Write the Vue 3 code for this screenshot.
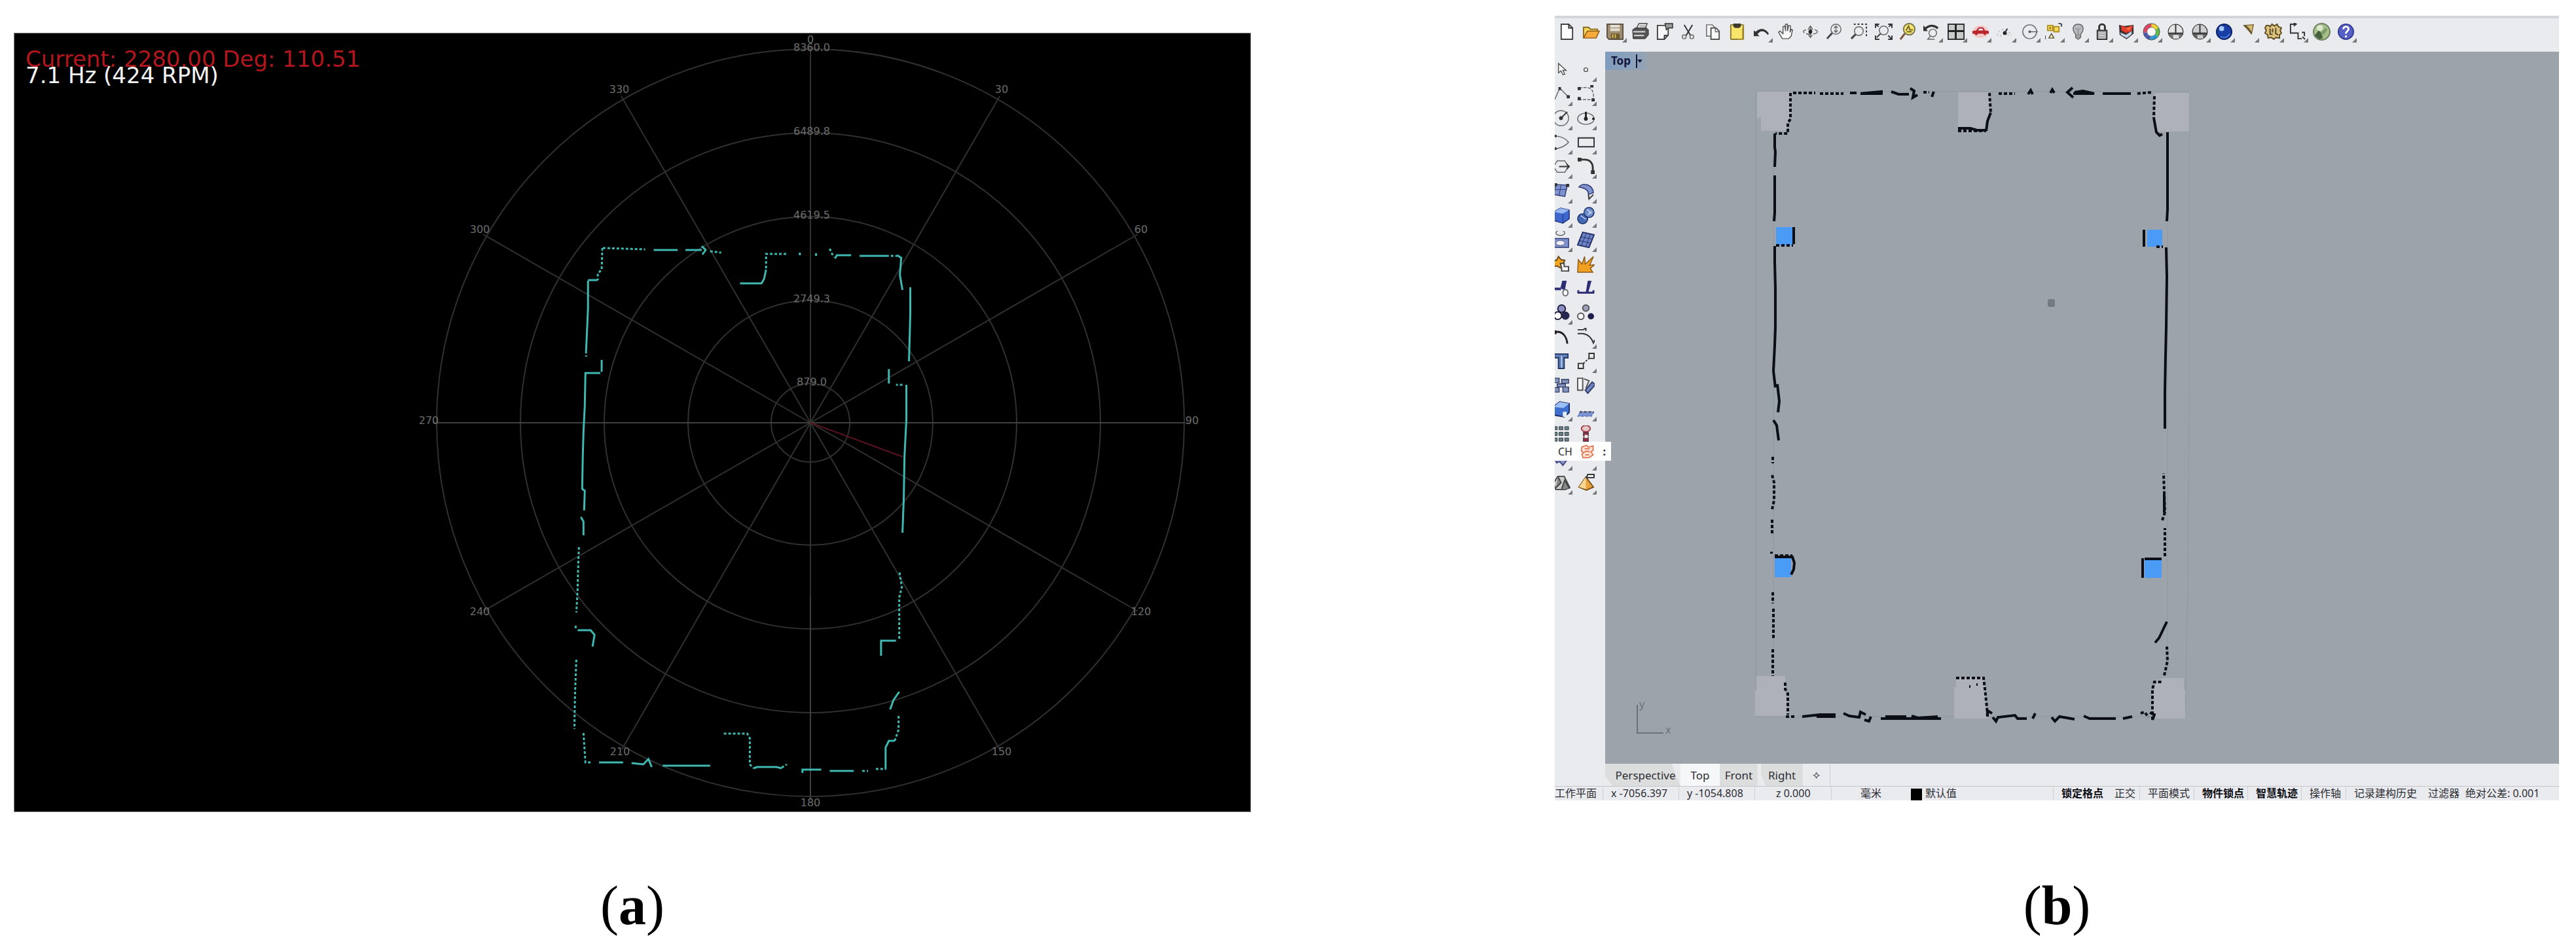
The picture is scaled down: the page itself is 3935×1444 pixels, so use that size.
<script setup>
const rings = [
  { r: 60, label: '879.0' },
  { r: 187, label: '2749.3' },
  { r: 315, label: '4619.5' },
  { r: 443, label: '6489.8' },
  { r: 571, label: '8360.0' }
]
const cx = 1216
const cy = 595
const spokes = Array.from({ length: 12 }, (_, i) => {
  const a = (i * 30 * Math.PI) / 180
  return {
    deg: i * 30,
    x: Math.round(cx + Math.sin(a) * 577),
    y: Math.round(cy - Math.cos(a) * 576),
    tx: Math.round(cx + Math.sin(a) * 583),
    ty: Math.round(cy - Math.cos(a) * (i === 0 ? 588 : 584)) + (i === 0 ? 8 : 2)
  }
})

const K = 'fill="none" stroke="#333" stroke-width="2"'
const G = 'fill="none" stroke="#666" stroke-width="1.5"'
const tools = [
  { n: 'New', s: `<path d="M5 2h12l6 6v18H5z" fill="#fdfdfd" stroke="#444" stroke-width="2"/><path d="M17 2v6h6" ${K}/>` },
  { n: 'Open', s: '<path d="M2 24V7h8l3 3h11v5" fill="#f6d85a" stroke="#8a6a1c" stroke-width="2"/><path d="M2 24l6-11h19l-5 11z" fill="#f7a93c" stroke="#8a5a18" stroke-width="1.5"/>' },
  { n: 'Save', f: 1, s: '<path d="M1 2h25v24H4l-3-3z" fill="#a08d72" stroke="#5c5142" stroke-width="2"/><path d="M6 3h15v10H6z" fill="#e3ded2"/><path d="M6 8h15" stroke="#8b7c66"/><path d="M7 17h14v8H7z" fill="#6e5a2c"/><path d="M10 18v6M14 18v6" stroke="#d6b95c" stroke-width="2"/>' },
  { n: 'Print', s: '<path d="M8 9l4-8h13l-3 8z" fill="#eee" stroke="#444" stroke-width="1.5"/><path d="M13 5h9" stroke="#555"/><path d="M2 11l4-3h18l3 3v8l-5 6H3z" fill="#555" stroke="#222"/><path d="M3 14h19M4 20h16" stroke="#ddd" stroke-width="2"/>' },
  { n: 'Properties', s: `<path d="M3 4h17v15l-6 7H3z" fill="#f8f8f8" stroke="#444" stroke-width="2"/><path d="M14 26v-6h6" ${K}/><path d="M15 1h12v7h-7l-3 3z" fill="#999" stroke="#333" stroke-width="1.5"/>` },
  { n: 'Cut', s: `<path d="M7 3l10 17M20 3L10 20" ${K}/><circle cx="7" cy="22" r="3" ${G}/><circle cx="19" cy="22" r="3" ${G}/>` },
  { n: 'Copy', s: `<path d="M4 3h9l4 4v14H4z" fill="#f5f5f5" stroke="#666" stroke-width="1.5"/><path d="M11 8h8l5 5v13H11z" fill="#fafafa" stroke="#555" stroke-width="2"/><path d="M18 8v6h6" ${G}/>` },
  { n: 'Paste', s: '<rect x="4" y="3" width="20" height="23" rx="1" fill="#f8e56b" stroke="#8c7a32" stroke-width="2"/><path d="M8 1h12v5l-3 2h-6L8 6z" fill="#3d3a2c"/><path d="M23 8v18h-8" fill="none" stroke="#a88b30" stroke-width="2"/>' },
  { n: 'Undo', f: 1, s: '<path d="M1 12v9h9l-3-3c4-6 10-7 16 1l2-2C19 7 10 8 4 14z" fill="#333"/>' },
  { n: 'Pan', s: `<path d="M8 25L2 15l2-2 5 4V6l3-1 1 8V2h3v11l2-9 3 1-1 10 2-5 2 1-2 10-4 4z" fill="#fafafa" stroke="#555" stroke-width="1.5"/>` },
  { n: 'Rotate view', s: `<ellipse cx="14" cy="14" rx="11" ry="4" ${G} stroke-dasharray="8 3"/><path d="M14 5v18M11 9l3-4 3 4M11 19l3 4 3-4" ${G}/><circle cx="14" cy="14" r="3" fill="#222"/>` },
  { n: 'Zoom dynamic', s: `<circle cx="16" cy="10" r="8" ${G}/><path d="M10 16L2 25" stroke="#444" stroke-width="3"/><path d="M16 5v10M13 8l3-3 3 3M13 12l3 3 3-3" ${G}/>` },
  { n: 'Zoom window', s: `<path d="M6 2h20v18h-4" ${K} stroke-dasharray="3 3"/><circle cx="14" cy="13" r="7" ${G}/><path d="M9 18l-7 7" stroke="#444" stroke-width="3"/>` },
  { n: 'Zoom extents', s: `<circle cx="14" cy="12" r="7" ${G}/><path d="M9 17l-6 6" ${K}/><path d="M1 8V2h6M21 2h6v6M27 20v6h-6M7 26H1v-6M1 2l5 4M27 2l-5 4M27 26l-6-6" ${K}/>` },
  { n: 'Zoom selected', s: '<circle cx="16" cy="10" r="9" fill="#f5e36a" stroke="#777452" stroke-width="2"/><path d="M9 17l-7 9" stroke="#774d35" stroke-width="3"/><path d="M11 12l4-7 2 6h5M12 14h8" fill="none" stroke="#6b6431" stroke-width="2"/>' },
  { n: 'Undo view', f: 1, s: `<path d="M0 4v9h7l-2-3c5-5 11-5 17 0l2-3C17 1 9 2 3 7z" fill="#333"/><circle cx="15" cy="16" r="6" ${G}/><path d="M11 21l-4 5h11" ${G}/>` },
  { n: 'Viewports', f: 1, s: '<path d="M1 2h25v24H1z" fill="#c7ccca" stroke="#333" stroke-width="2"/><path d="M13 2v24M1 13h25" stroke="#222" stroke-width="3"/>' },
  { n: 'Set view', f: 1, s: '<ellipse cx="14" cy="14" rx="13" ry="10" fill="#f4c9ca"/><path d="M1 17v-4l6-1 4-5h7l3 5 6 1v4h-4l-2 3-3-3H10l-3 3-3-3z" fill="#b8252b"/><path d="M12 9h5l1 3h-8z" fill="#eee"/>' },
  { n: 'Set CPlane', f: 1, s: `<path d="M2 20c2-9 9-12 15-8l8 6M6 21c5-4 10-4 18-1" fill="none" stroke="#999" stroke-dasharray="3 3"/><circle cx="14" cy="16" r="3" fill="#222"/><path d="M14 16l4-7" ${K}/>` },
  { n: 'Object snap', f: 1, s: `<circle cx="14" cy="14" r="11" ${G}/><path d="M14 14h13" ${G}/><circle cx="14" cy="14" r="2" fill="#555"/>` },
  { n: 'Select', f: 1, s: '<path d="M4 4h8v8H4zM14 6h8v8h-8z" fill="#f6e05a" stroke="#b18e26" stroke-width="2"/><circle cx="8" cy="8" r="1.5" fill="#875f1e"/><path d="M10 17l4 7H6z" fill="#f7f0ba" stroke="#5a5336" stroke-width="1.5"/><path d="M21 0l5 2v4M0 26v-6" fill="none" stroke="#444" stroke-width="2"/>' },
  { n: 'Hide', f: 1, s: '<path d="M10 18C3 10 6 2 14 2s11 8 4 16v5l-4 3-4-3z" fill="#b7b9bd" stroke="#666" stroke-width="1.5"/><path d="M10 8l4 3 4-3M14 11v8M10 19h8M10 22h8" fill="none" stroke="#777"/>' },
  { n: 'Lock', f: 1, s: `<path d="M9 12V6c0-5 9-5 9 0v6" fill="none" stroke="#333" stroke-width="3"/><path d="M6 12h15v14H6z" fill="#aaa" stroke="#333" stroke-width="2"/><path d="M8 16h11M8 20h11M8 24h11" stroke="#eee"/>` },
  { n: 'Layers', f: 1, s: '<path d="M2 3l8 2 15-2v14l-11 9-11-7z" fill="#3a3030"/><path d="M5 4l8 3 11-3-2 9-9 3-7-4z" fill="#e43b2d"/><path d="M4 15l9 4 9-6v5l-8 6-9-5z" fill="#c3d6ec"/><path d="M12 9l10-3-4 6z" fill="#f4703c"/>' },
  { n: 'Colour', f: 1, s: '<g fill="none" stroke-width="6"><path d="M14 4a10 10 0 0 1 9 5" stroke="#f1d12c"/><path d="M23 9a10 10 0 0 1-1 11" stroke="#62bb46"/><path d="M22 20a10 10 0 0 1-10 4" stroke="#2e9bd0"/><path d="M12 24a10 10 0 0 1-8-9" stroke="#4d56b0"/><path d="M4 15a10 10 0 0 1 10-11" stroke="#dd4560"/></g><circle cx="14" cy="14" r="13" fill="none" stroke="#555"/><circle cx="14" cy="14" r="7" fill="#fff" stroke="#777"/>' },
  { n: 'Shade', s: '<circle cx="14" cy="14" r="12" fill="#777" stroke="#333"/><path d="M3 15C3 7 8 3 12 3h4c5 1 9 6 9 12z" fill="#e4e4e4"/><path d="M10 19h9v6h-9z" fill="#ddd"/><path d="M14 2v14M2 17h24" stroke="#333" stroke-width="2"/>' },
  { n: 'Shade all', f: 1, s: '<circle cx="14" cy="14" r="12" fill="#666" stroke="#333"/><path d="M3 15C3 7 8 3 12 3h4c5 1 9 6 9 12z" fill="#cfcfcf"/><path d="M10 19h9v6h-9z" fill="#ccc"/><path d="M14 2v14M2 17h24" stroke="#333" stroke-width="2"/>' },
  { n: 'Render', f: 1, s: '<circle cx="14" cy="14" r="12" fill="#173fa5" stroke="#0b2364" stroke-width="2"/><circle cx="10" cy="9" r="4" fill="#a8c8f5"/><path d="M8 22c6 3 12 1 15-5" fill="none" stroke="#4a7be0" stroke-width="2"/>' },
  { n: 'Spotlight', f: 1, s: '<path d="M7 4l15-1-3 14z" fill="#d9bd72" stroke="#7c6533" stroke-width="1.5"/><path d="M7 4c5 1 9 6 12 13" fill="none" stroke="#5a4b2c" stroke-width="2"/>' },
  { n: 'Options', f: 1, s: '<path d="M3 4h4l2 2 3-4 4 3 4-3 2 4 5 2-2 4 2 4-3 3v5l-6-1-3 3-4-3-5 1-1-5-4-3 2-4-2-4z" fill="#dcc27a" stroke="#5b4a22" stroke-width="2"/><path d="M9 9v9h4M13 9v6M18 8v9l4 2" fill="none" stroke="#4f452a" stroke-width="2"/>' },
  { n: 'Dimension', f: 1, s: `<path d="M11 2H3v14h12v9h6" ${K}/><path d="M8 0l4 2-4 3M22 22l4 4M21 15h4v6" ${K}/>` },
  { n: 'Grasshopper', s: '<circle cx="14" cy="14" r="13" fill="#a5c088" stroke="#6f7f62" stroke-width="2"/><path d="M3 20l6-8 4 3 3 9-6 2z" fill="#45603c"/><path d="M12 16l8-8 3 3-6 8z" fill="#7d9a68"/><circle cx="11" cy="8" r="5" fill="#dbe7c9"/>' },
  { n: 'Help', f: 1, s: '<circle cx="14" cy="14" r="12" fill="#5560c4" stroke="#353d94" stroke-width="2"/><path d="M10 10c0-6 9-5 8 0 0 3-4 3-4 7M14 20v3" fill="none" stroke="#fff" stroke-width="3"/>' }
]

const B = 'fill="#7d92cf" stroke="#2c3570" stroke-width="1.5"'
const palette = [
  { n: 'Pointer', s: '<path d="M9 4v15l4-3 3 6 3-1-3-6h5z" fill="#fafafa" stroke="#555" stroke-width="1.5"/>' },
  { n: 'Point', f: 1, s: '<circle cx="14" cy="14" r="3" fill="#fff" stroke="#555" stroke-width="1.5"/>' },
  { n: 'Polyline', f: 1, s: `<path d="M3 23l8-18 14 14" ${G}/><path d="M9 3h4v5H9zM22 16h5v5h-5z" fill="#333"/>` },
  { n: 'Control curve', f: 1, s: `<path d="M3 5c20-4 24 2 23 18H3" ${G} stroke-dasharray="5 2"/><path d="M1 3h5v5H1zM1 19h5v5H1zM21-1h5v5h-5zM23 21h5v5h-5z" fill="#333"/>` },
  { n: 'Circle', f: 1, s: `<circle cx="13" cy="14" r="12" ${G}/><path d="M13 14l10-10" ${K}/><circle cx="13" cy="14" r="3" fill="#333"/>` },
  { n: 'Ellipse', f: 1, s: `<ellipse cx="14" cy="15" rx="13" ry="9" ${G}/><path d="M14 4v14M24 15h4" stroke="#222" stroke-width="3"/><circle cx="14" cy="15" r="3" fill="#222"/>` },
  { n: 'Arc', f: 1, s: `<path d="M2 4c11 0 18 3 23 10-5 6-12 9-23 11" ${G}/><path d="M0 2h6v4H0zM0 22h6v4H0z" fill="#333"/>` },
  { n: 'Rectangle', f: 1, s: `<path d="M2 7h25v14H2z" ${K}/>` },
  { n: 'Polygon', f: 1, s: `<path d="M7 5h12l6 9-6 9H7l-6-9z" ${G}/><path d="M10 14h16M22 10l4 4-4 4" ${K}/>` },
  { n: 'Fillet', f: 1, s: `<path d="M3 3h9c9 0 13 6 13 13v9" fill="none" stroke="#333" stroke-width="3"/><path d="M1 0h6v6H1zM22 20h6v6h-6z" fill="#333"/>` },
  { n: 'Surface', f: 1, s: `<path d="M4 3l19 1-4 18-17-3z" ${B}/><path d="M3 11h19M13 3l-3 18" stroke="#2c3570"/><path d="M2 1h5v5H2zM21 2h5v5h-5z" fill="#333"/>` },
  { n: 'Revolve', f: 1, s: `<path d="M3 7C10-1 25 3 26 16l-8 3c0-8-6-10-15-12z" ${B} /><path d="M18 19l1 7 7-7" ${K}/>` },
  { n: 'Box', f: 1, s: '<path d="M2 8l10-6 14 3v14l-10 7-14-4z" fill="#3d67cd" stroke="#1b2f77" stroke-width="1.5"/><path d="M2 8l10-6 14 3-10 6z" fill="#95b8f4"/><path d="M16 11v15" stroke="#1b2f77"/>' },
  { n: 'Boolean', f: 1, s: '<circle cx="9" cy="19" r="8" fill="#4668b4" stroke="#1b2f67" stroke-width="1.5"/><circle cx="19" cy="9" r="8" fill="#6b8bcb" stroke="#1b2f67" stroke-width="1.5"/><path d="M6 14l8 6M16 4l7 7M17 13l6-6" stroke="#cbd9f3" stroke-width="1.5"/>' },
  { n: 'Project', f: 1, s: `<ellipse cx="12" cy="3" rx="7" ry="4" ${G}/><path d="M1 12h24v14H1z" ${B}/><ellipse cx="12" cy="19" rx="7" ry="4" fill="#eef" stroke="#556"/>` },
  { n: 'Mesh', f: 1, s: '<path d="M9 2l18 4-8 20-18-4z" fill="#6d85c8" stroke="#252e64" stroke-width="2"/><path d="M6 9l18 4M3 15l18 4M15 3L7 23M21 5l-7 20" stroke="#252e64"/>' },
  { n: 'Explode', s: '<path d="M1 8h5l3-6 4 5 6 1-3 6-4 6-5-3-6 1z" fill="#f4a91d" stroke="#6a4818" stroke-width="2"/><path d="M12 13h6v5h7v7H14v-5z" fill="#fff" stroke="#444" stroke-width="2"/>' },
  { n: 'Split', s: '<path d="M1 27l1-20 6 7 4-12 1 12L26 2l-6 14 8-1-7 6 4 6z" fill="#f2a022" stroke="#8a5a1c" stroke-width="1.5"/>' },
  { n: 'Trim', s: '<path d="M1 15h12" stroke="#2b2c72" stroke-width="4"/><path d="M12 14l3-12h7l-3 15z" fill="#2b2c72"/><ellipse cx="20" cy="21" rx="4" ry="5" fill="#fff" stroke="#667" stroke-width="2"/>' },
  { n: 'Join', s: '<path d="M1 21h26M2 17v5M26 17v5" stroke="#2b2c72" stroke-width="3" fill="none"/><path d="M14 20l3-18h6l-5 18z" fill="#2b2c72"/>' },
  { n: 'Group', f: 1, s: '<circle cx="14" cy="8" r="6" fill="#8b8ec0" stroke="#1c1c3a" stroke-width="2"/><circle cx="8" cy="19" r="6" fill="#fff" stroke="#1c1c3a" stroke-width="2"/><circle cx="20" cy="19" r="6" fill="#25254f" stroke="#1c1c3a"/>' },
  { n: 'Ungroup', s: '<circle cx="14" cy="7" r="5" fill="#9a9fb8" stroke="#555" stroke-width="2"/><circle cx="6" cy="20" r="5" fill="#fff" stroke="#555" stroke-width="2"/><circle cx="22" cy="20" r="5" fill="#1d1d48"/>' },
  { n: 'Edit curve', s: `<path d="M2 7c14-4 20 8 21 18" fill="none" stroke="#222" stroke-width="3"/><path d="M1 4h5v6H1z" fill="#222"/>` },
  { n: 'Extend', f: 1, s: `<path d="M1 3h9l4-3v5M1 9h8c9 1 14 7 17 15l2-5" fill="none" stroke="#333" stroke-width="2"/>` },
  { n: 'Text', s: '<path d="M2 3h22v6h-6v17h-9V9H2z" fill="#5f7db6" stroke="#223663" stroke-width="2"/><path d="M14 6v19" stroke="#b9cbed" stroke-width="2"/>' },
  { n: 'Move', f: 1, s: `<path d="M19 2h8v8h-8zM2 18h8v8H2z" fill="#eee" stroke="#333" stroke-width="2"/><path d="M10 18l9-8" ${K} stroke-dasharray="3 2"/>` },
  { n: 'Array', s: '<path d="M2 3h8v7H2zM14 5h11v6H14zM2 18h8v7H2zM16 17h9v8h-9zM7 12h13v5H7z" fill="#8594bb" stroke="#323d66" stroke-width="1.5"/>' },
  { n: 'Rotate', s: '<path d="M1 3h8v19H1z" fill="#f5f5fb" stroke="#555" stroke-width="2"/><path d="M11 4l8 3-5 12" fill="none" stroke="#555" stroke-width="2"/><path d="M24 9l5 4-12 14-4-5z" fill="#6f83c0" stroke="#33406d" stroke-width="2"/>' },
  { n: 'Solid', f: 1, s: '<path d="M1 10L11 2l15 3v14l-8 7-17-3z" fill="#3e6fcd" stroke="#1b2f67" stroke-width="2"/><path d="M1 10L11 2l15 3-9 7z" fill="#9cc0f5"/><path d="M16 18h6v8h-6z" fill="#e8eefc"/>' },
  { n: 'Plane', f: 1, s: '<path d="M5 18h22l-4 7H1z" fill="#7c93d6" stroke="#43559c" stroke-dasharray="5 2"/><path d="M4 18h22" stroke="#333" stroke-width="2" stroke-dasharray="4 3"/>' },
  { n: 'Grid', s: '<path d="M1 2h6v5H1zM10 2h6v5h-6zM19 2h6v5h-6zM1 11h6v5H1zM10 11h6v5h-6zM19 11h6v5h-6zM1 20h6v5H1zM10 20h6v5h-6zM19 20h6v5h-6z" fill="#6d8388" stroke="#28363c"/>' },
  { n: 'Analyse', s: '<ellipse cx="14" cy="5" rx="7" ry="5" fill="#e6c9cb" stroke="#a43d45" stroke-width="2"/><path d="M10 11h8v6h-8zM10 19h8v7h-8z" fill="#8d2f45" stroke="#333"/><path d="M12 15h5v5h-5z" fill="#eee"/>' },
  { n: 'Flow', f: 1, s: '<path d="M1 10l20-4 4 7-9 12-5-6-5 2z" fill="#8894c4" stroke="#434d84" stroke-width="2"/>' },
  { n: 'Drop', f: 1, s: '<path d="M5 8h8l-4 8z" fill="#222"/>' },
  { n: 'Sphere', f: 1, s: '<path d="M1 15L8 4h10l9 18-8 3H5z" fill="#c9cbc9" stroke="#444" stroke-width="2"/><path d="M14 24l5-14 7 13M8 4l5 10-8 8" fill="#888" stroke="#444" stroke-width="2"/>' },
  { n: 'Cone', f: 1, s: '<path d="M3 21L14 5l12 16-11 5z" fill="#e9a23c" stroke="#75501d" stroke-width="2"/><path d="M14 5L3 21l11 3z" fill="#f8d794"/><path d="M17 1h10v5H15z" fill="#fff" stroke="#333" stroke-width="2"/>' }
]

const views = [
  { n: 'Perspective', c: 'perspective' },
  { n: 'Top', c: 'top' },
  { n: 'Front', c: 'front' },
  { n: 'Right', c: 'right' }
]
const toggles = [
  { n: '锁定格点', on: true, sep: true },
  { n: '正交' },
  { n: '平面模式', sep: true },
  { n: '物件锁点', on: true, sep: true },
  { n: '智慧轨迹', on: true, sep: true },
  { n: '操作轴', sep: true },
  { n: '记录建构历史', sep: true },
  { n: '过滤器' }
]
</script>

<template>
  <main class="page">
    <section class="scan">
      <svg viewBox="0 0 1888 1189" class="canvas" role="img" aria-label="Lidar scan">
        <g class="polar">
          <circle v-for="g in rings" :key="g.r" :cx="cx" :cy="cy" :r="g.r" />
          <line v-for="s in spokes" :key="s.deg" :x1="cx" :y1="cy" :x2="s.x" :y2="s.y" />
          <path d="M645 595H1787M1216 860V1170" class="axis" />
        </g>
        <g class="labels">
          <text v-for="g in rings" :key="g.r" :x="cx + 2" :y="cy - g.r + 3">{{ g.label }}</text>
          <text v-for="s in spokes" :key="s.deg" :x="s.tx" :y="s.ty">{{ s.deg }}</text>
        </g>
        <path d="M1216 595L1357 647" class="beam" />
        <g class="cloud" transform="translate(-17 -51) scale(0.9925 1)">
          <path d="M1001 382H1038M1050 382H1075M1075 376L1081 382L1076 389M900 429V470L898 515L897 536M919 570H896L895 620L893 660L892 695L891 747L895 750L894 780M889 790L893 797V818M884 963H904L910 970L907 988M917 1165H954M967 1166L985 1168L993 1160L998 1172M1015 1170H1088M1155 1174L1160 1172H1190L1198 1174M1230 1181V1176H1259M1272 1178H1309M1365 1084L1370 1070L1379 1057M1351 1002V979H1374M1384 814L1386 760L1387 699L1390 640V588M1363 564V586M1394 552L1396 480V439M1384 443L1382 432L1380 420L1382 394L1376 390M1318 391H1359M1280 395L1283 390H1305M1174 412L1171 426L1167 433H1134M915 428H900M921 550V568M1358 1175V1142L1363 1132H1372" />
          <path class="dots" d="M923 379L988 381M922 379L921 412L915 418V428M1088 384L1105 386M897 536V545M886 836L885 860L884 900L882 936M881 956V960M882 1008L880 1060L879 1114M893 1120L896 1165H905M1109 1121H1145L1149 1128V1168L1155 1174M1198 1173L1206 1168M1322 1178H1331M1343 1175H1359M1372 1132L1378 1115V1091M1379 976V913L1383 897L1379 872M1384 588H1374M1272 380L1278 393M1251 387V392M1226 386V392M1205 388H1174V412M1359 391H1376" />
        </g>
        <text x="17" y="51" class="reading current">Current: 2280.00 Deg: 110.51</text>
        <text x="17" y="76" class="reading">7.1 Hz (424 RPM)</text>
      </svg>
    </section>

    <section class="modeller">
      <nav class="toolbar" aria-label="Standard tools">
        <div class="tools">
          <button v-for="t in tools" :key="t.n" type="button" :aria-label="t.n" class="tool">
            <svg viewBox="0 0 28 28" class="icon" v-html="t.s"></svg>
            <span v-if="t.f" class="corner"></span>
          </button>
        </div>
      </nav>

      <div class="workspace">
        <aside class="side">
          <div class="palette">
            <button v-for="t in palette" :key="t.n" type="button" :aria-label="t.n" class="tool">
              <svg viewBox="0 0 28 28" class="icon" v-html="t.s"></svg>
              <span v-if="t.f" class="corner"></span>
            </button>
          </div>
          <div class="ime">
            <span>CH</span>
            <svg viewBox="0 0 28 28" class="icon"><path d="M4 6l8-3 4 3 8-2v8l-4 2 4 6-8 5H6l-2-6 3-3-4-3zM9 9h9M8 15l5-2 5 2M10 20h7" fill="#fbe3d8" stroke="#e0714a" stroke-width="2" /></svg>
            <b>:</b>
          </div>
        </aside>

        <div class="viewport">
          <button type="button" class="view-name">Top <span class="bar"></span><span class="arrow"></span></button>
          <svg viewBox="2452 79 1457 1088" class="canvas" role="img" aria-label="Top view plan">
            <path class="outline" d="M2682 140H3345M2682 140V1095H3338M3344 142V600L3342 900L3338 1095M2709 205V1033M3311 205V1033" />
            <path class="block" d="M2684 140H2735V182H2731V200H2690V180H2684zM2991 141H3039V172L3034 198H2991zM3291 142H3344V201H3294zM2683 1033H2727V1050L2731 1094H2681V1055H2683zM2988 1035H3030L3037 1098H2985V1050H2988zM3294 1040L3306 1036H3336V1054H3338V1098H3289V1056z" />
            <path class="pillar" d="M2713 347h26v28h-26zM3280 351h23v26h-23zM2711 851h25v31h-25zM3276 853h26v30h-26z" />
            <path class="wall" d="M2826 142H2836M2842 143L2874 140V143H2842M2889 140L2900 144H2916M2918 135L2924 139L2922 149L2929 145M2954 140L2951 148M2711 204V225L2712 232L2711 255M2711 268V325L2710 338M2740 347V373M2711 376V400L2712 440V500L2711 528L2709 567L2712 592M2715 587L2718 613L2716 630M2709 642L2714 650L2717 673M2711 851H2738L2741 860L2740 870L2736 878M2753 1095L2780 1092H2802V1095H2775M2816 1090L2825 1094L2840 1096L2842 1088L2850 1092M2858 1095L2855 1102L2848 1100M2873 1098H2965M2880 1095H2912M2920 1094L2930 1097L2960 1095M3036 1095V1086L3043 1090M3044 1096L3049 1102L3052 1096L3078 1093L3082 1098H3096M3105 1098L3109 1090M3134 1096L3139 1102L3146 1095L3169 1099M3183 1094L3192 1098H3232M3243 1098L3257 1095M3284 1089L3291 1092L3288 1100M3292 982L3298 975L3310 950M3273 853V883M3276 854H3302M3307 655V600L3308 543L3309 500L3310 423L3309 378M3275 351V377M3310 338L3311 320V260V202M3303 205L3299 207L3294 202L3290 180M3212 143H3255M3169 141L3182 139L3199 143H3167M3166 134L3158 141L3167 149M3098 144L3102 138L3105 144M3132 142L3135 137L3138 142M3041 172L3036 185L3034 200M3306 753V783M2991 196H3010L3020 199H3034" />
            <path class="wall dots" d="M2739 142H2773M2780 143H2816M2938 141H2947M2735 142V182L2731 188V204H2712M2713 375H2739M2708 698V708M2707 726L2710 737V765L2707 778M2707 794V817M2706 843V846M2711 849H2738M2708 905V922M2709 930V977M2708 992V1033M2727 1043V1053L2731 1060V1092M2728 1095H2744M2988 1036H3030L3032 1052L3035 1080L3036 1095M3008 1049H3010M3019 1046H3021M3270 1090L3276 1088L3282 1096M3288 1100V1053L3291 1042H3303M3306 1032L3311 1010L3310 988M3307 850V807M3303 795L3307 783L3305 723M3294 377H3304M3265 143L3288 141M3291 147L3290 180M3053 143H3078M3039 142L3041 172M2991 200H3034" />
            <rect x="3128" y="457" width="11" height="12" rx="3" class="cursor" />
            <path class="gizmo" d="M2501 1077V1120H2541" />
            <text x="2504" y="1082" class="gizmo-label">y</text>
            <text x="2544" y="1121" class="gizmo-label">x</text>
          </svg>
        </div>

        <div class="tabs" role="tablist">
          <button v-for="v in views" :key="v.n" type="button" role="tab" :aria-selected="v.n === 'Top'" class="tab" :class="v.c">{{ v.n }}</button>
          <button type="button" class="tab add" aria-label="Add view">✧</button>
        </div>
      </div>

      <footer class="status">
        <span class="plane">工作平面</span>
        <span class="sep">x -7056.397</span>
        <span class="sep">y -1054.808</span>
        <span class="sep zed">z 0.000</span>
        <span class="sep unit">毫米</span>
        <span class="layer"><i></i>默认值</span>
        <button v-for="t in toggles" :key="t.n" type="button" :class="{ on: t.on, sep: t.sep }">{{ t.n }}</button>
        <span class="tolerance">绝对公差: 0.001</span>
      </footer>
    </section>

    <p class="caption">(<b>a</b>)</p>
    <p class="caption">(<b>b</b>)</p>
  </main>
</template>

<style>
body {
  margin: 0;
  background: #fff;
}
</style>

<style scoped>
.page {
  display: grid;
  grid-template-columns: minmax(0, 1888fr) minmax(0, 1534fr);
  column-gap: 465px;
  align-items: start;
  padding: 24px 26px 12px 22px;
}
.canvas {
  display: block;
  width: 100%;
  height: auto;
}
.scan {
  margin-top: 27px;
  background: #000;
  box-shadow: 0 0 0 1px #8a8a8a;
}
.polar {
  fill: none;
  stroke: #303030;
  stroke-width: 2;
}
.polar .axis {
  stroke: #404040;
}
.labels {
  fill: #6c6c6c;
  font: 16px "DejaVu Sans", sans-serif;
  text-anchor: middle;
}
.beam {
  stroke: #5c1420;
  stroke-width: 2;
}
.cloud {
  fill: none;
  stroke: #3fb8b2;
  stroke-width: 3;
}
.cloud .dots {
  stroke-dasharray: 4 3;
}
.reading {
  fill: #f2f2f2;
  font: 34px "DejaVu Sans", sans-serif;
}
.reading.current {
  fill: #b3161c;
}
.modeller {
  background: #eaebef;
  color: #2c2d33;
  font: 16px/22px "Noto Sans", "Noto Sans CJK SC", sans-serif;
}
button {
  margin: 0;
  padding: 0;
  border: 0;
  background: none;
  color: inherit;
  font: inherit;
}
.toolbar {
  display: flex;
  height: 51px;
  border-top: 4px solid #d3d5da;
}
.toolbar::after {
  content: "";
  flex: 1;
}
.tools {
  display: grid;
  flex: 4;
  grid-template-columns: repeat(33, minmax(0, 1fr));
  align-items: center;
  padding-bottom: 10px;
}
.tool {
  position: relative;
  display: flex;
  align-items: center;
  justify-content: center;
}
.icon {
  display: block;
  width: 27px;
  height: 27px;
}
.corner {
  position: absolute;
  right: 2px;
  bottom: -3px;
  border-bottom: 7px solid #777;
  border-left: 7px solid transparent;
}
.workspace {
  display: grid;
  grid-template-columns: 77px minmax(0, 1fr);
  grid-template-rows: auto 34px;
}
.side {
  position: relative;
  display: flex;
  flex-direction: column;
  grid-row: 1 / 3;
  padding-top: 9px;
}
.side::after {
  content: "";
  flex: 2;
}
.palette {
  display: grid;
  flex: 3;
  grid-template-columns: 37px 37px;
  grid-template-rows: repeat(18, minmax(0, 1fr));
  margin-left: -8px;
  clip-path: inset(0 0 0 8px);
}
.palette .corner {
  bottom: 0;
}
.ime {
  position: absolute;
  top: 596px;
  left: 0;
  z-index: 1;
  display: flex;
  align-items: center;
  justify-content: space-between;
  box-sizing: border-box;
  width: 86px;
  height: 29px;
  padding: 0 8px 0 5px;
  background: #fff;
}
.ime .icon {
  width: 24px;
  height: 24px;
}
.viewport {
  position: relative;
  background: #9ca3aa;
}
.view-name {
  position: absolute;
  top: 0;
  left: 0;
  display: flex;
  align-items: center;
  gap: 8px;
  height: 28px;
  padding: 0 6px 0 9px;
  background: linear-gradient(90deg, #7f9cbf, #94a4b5);
  color: #10163e;
  font-size: 17px;
  font-weight: 700;
}
.bar {
  width: 2px;
  height: 21px;
  background: #10163e;
}
.arrow {
  margin-left: -8px;
  border-top: 5px solid #10163e;
  border-right: 4px solid transparent;
  border-left: 4px solid transparent;
}
.outline {
  fill: none;
  stroke: #9197a1;
  stroke-width: 1;
}
.block {
  fill: #aeb1ba;
}
.pillar {
  fill: #4a9bf5;
}
.wall {
  fill: none;
  stroke: #0b0e14;
  stroke-width: 4;
}
.wall.dots {
  stroke-dasharray: 5 3;
}
.cursor {
  fill: #747a81;
}
.gizmo {
  fill: none;
  stroke: #6b7178;
  stroke-width: 2;
}
.gizmo-label {
  fill: #6b7178;
  font: 16px "Noto Sans", sans-serif;
}
.tabs {
  display: flex;
  align-items: stretch;
}
.tab {
  height: 34px;
  padding: 2px 0 0;
  font-size: 17px;
  line-height: 32px;
}
.perspective {
  width: 115px;
  padding-left: 8px;
  background: #dcdddd;
  clip-path: polygon(0 0, 88% 0, 100% 100%, 10% 100%, 0 55%);
}
.top {
  width: 60px;
  background: #f6f7f9;
}
.front {
  width: 58px;
  margin-right: 5px;
  background: #dcdddd;
}
.right {
  width: 64px;
  background: #dcdddd;
  clip-path: polygon(0 0, 100% 0, 100% 100%, 12% 100%, 0 50%);
}
.add {
  width: 42px;
  box-sizing: border-box;
  border-right: 1px solid #cfd1d6;
  font-family: "DejaVu Sans", sans-serif;
}
.status {
  display: grid;
  grid-template-columns: 73fr 116fr 116fr 117fr 122fr 217fr 82fr 50fr 83fr 82fr 82fr 68fr 114fr 66fr 146fr;
  box-sizing: border-box;
  height: 22px;
  border-top: 1px solid #c3c5cb;
  line-height: 22px;
  white-space: nowrap;
}
.status > * {
  box-sizing: border-box;
  min-width: 0;
  padding-left: 12px;
  text-align: left;
  line-height: 21px;
}
.status .plane {
  padding-left: 0;
}
.status .zed {
  padding-left: 32px;
}
.status .unit {
  padding-left: 44px;
}
.status .sep {
  border-left: 1px solid #cfd1d6;
}
.status .layer {
  display: flex;
  gap: 5px;
  padding-left: 0;
}
.layer i {
  width: 17px;
  margin-top: 3px;
  background: #000;
}
.status .on {
  color: #0c0d12;
  font-weight: 700;
}
.status .tolerance {
  padding-left: 3px;
}
.caption {
  margin: 97px 0 0;
  color: #000;
  font: 84px/93px "Liberation Serif", serif;
  text-align: center;
}
</style>
